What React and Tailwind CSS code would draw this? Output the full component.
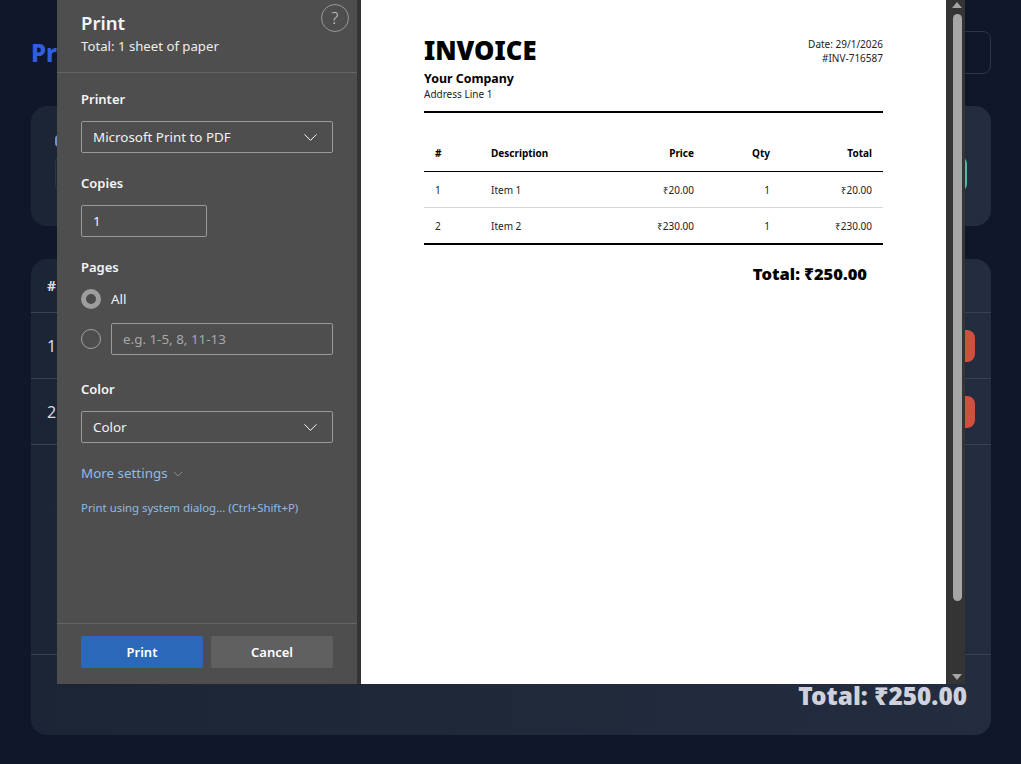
import { ChevronDown } from 'lucide-react';

const ui = "font-['Noto_Sans','Open_Sans',sans-serif]";

const SelectBox = ({ value }) => (
  <div className="flex h-8 w-[252px] items-center justify-between rounded-[2px] border border-[#9a9a9a] pl-[11px] pr-[10px] text-[13.4px] text-[#f2f2f2]">
    <span>{value}</span>
    <ChevronDown size={23} strokeWidth={1} className="text-white" />
  </div>
);

const Label = ({ children, className = '' }) => (
  <div className={`text-[13px] leading-5 font-semibold text-[#f5f5f5] ${className}`}>{children}</div>
);

const invoiceRows = [
  { id: 1, name: 'Item 1', price: '₹20.00', qty: 1, total: '₹20.00' },
  { id: 2, name: 'Item 2', price: '₹230.00', qty: 1, total: '₹230.00' },
];

const PrintSidebar = () => (
  <div className="flex w-[300px] flex-col bg-[#4e4e4e]">
    <div className="relative h-[73px] border-b border-[#646464] px-6 pt-[11px]">
      <div className="text-[18.5px] leading-6 font-semibold text-[#f5f5f5]">Print</div>
      <div className="mt-[1px] text-[13.2px] leading-5 text-[#ededed]">Total: 1 sheet of paper</div>
      <div className="absolute top-1 right-2 flex h-7 w-7 items-center justify-center rounded-full border border-[#9a9a9a] text-base font-light text-[#d0d0d0]">?</div>
    </div>
    <div className="flex-1 px-6 pt-4">
      <Label>Printer</Label>
      <div className="mt-3"><SelectBox value="Microsoft Print to PDF" /></div>
      <Label className="mt-5">Copies</Label>
      <div className="mt-3 flex h-8 w-[126px] items-center rounded-[2px] border border-[#9a9a9a] pl-[11px] text-[13.4px] text-[#f2f2f2]">1</div>
      <Label className="mt-5">Pages</Label>
      <div className="mt-3 flex h-5 items-center gap-[10px]">
        <div className="h-5 w-5 rounded-full border-[5px] border-[#9d9d9d] bg-[#4a4a4a]" />
        <span className="text-[13.4px] text-[#f2f2f2]">All</span>
      </div>
      <div className="mt-[14px] flex items-center gap-[10px]">
        <div className="h-5 w-5 rounded-full border border-[#a3a3a3]" />
        <div className="flex h-8 w-[222px] items-center rounded-[2px] border border-[#9a9a9a] pl-[11px] pt-[1px] text-[13.4px] text-[#a8a8a8]">e.g. 1-5, 8, 11-13</div>
      </div>
      <Label className="mt-6">Color</Label>
      <div className="mt-3"><SelectBox value="Color" /></div>
      <div className="mt-5 flex items-center gap-[2px] text-[13.4px] leading-5 text-[#8fbbe8]">
        More settings
        <ChevronDown size={16} strokeWidth={1} className="mt-[2px] text-[#a9a9a9]" />
      </div>
      <div className="mt-[17px] text-[11.4px] leading-4 text-[#8fbbe8]">Print using system dialog... (Ctrl+Shift+P)</div>
    </div>
    <div className="flex h-[61px] gap-2 border-t border-[#646464] px-6 pt-3">
      <button className="h-8 w-[122px] rounded-[2px] bg-[#2b68b9] pt-[1px] text-[13px] font-semibold text-white">Print</button>
      <button className="h-8 w-[122px] rounded-[2px] bg-[#606060] pt-[1px] text-[13px] font-semibold text-white">Cancel</button>
    </div>
  </div>
);

const InvoiceSheet = () => (
  <div className="flex-1 bg-white px-[63px] pt-[33px] text-black">
    <div className="flex items-start justify-between">
      <div>
        <div className="text-[25.6px] leading-9 font-black">INVOICE</div>
        <div className="mt-[1px] text-[12.4px] leading-[17px] font-bold">Your Company</div>
        <div className="text-[10px] leading-[14px] text-[#222]">Address Line 1</div>
      </div>
      <div className="pt-[4px] text-right text-[10px] leading-[14px] text-[#222]">
        <div>Date: 29/1/2026</div>
        <div>#INV-716587</div>
      </div>
    </div>
    <div className="mt-[10px] border-t-2 border-black" />
    <div className="mt-[28px] grid h-[31px] grid-cols-[56px_120px_83px_76px_102px] items-center border-b border-black px-[11px] pb-[6px] text-[10px] font-bold">
      <span>#</span>
      <span>Description</span>
      <span className="text-right">Price</span>
      <span className="text-right">Qty</span>
      <span className="text-right">Total</span>
    </div>
    <div>
      {invoiceRows.map((row) => (
        <div
          key={row.id}
          className="grid h-[36px] grid-cols-[56px_120px_83px_76px_102px] items-center border-b border-[#d6d6d6] px-[11px] pt-[1px] text-[10px] text-[#222] last:h-[37px] last:border-b-2 last:border-black"
        >
          <span>{row.id}</span>
          <span>{row.name}</span>
          <span className="text-right">{row.price}</span>
          <span className="text-right">{row.qty}</span>
          <span className="text-right">{row.total}</span>
        </div>
      ))}
    </div>
    <div className="mt-[17px] pr-4 text-right text-[16.5px] leading-6 font-black">Total: ₹250.00</div>
  </div>
);

const Scrollbar = () => (
  <div className="relative w-[19px] bg-[#343434]">
    <div className="absolute top-[2px] left-[6px] h-0 w-0 border-x-[5px] border-b-[6px] border-x-transparent border-b-[#a6a6a6]" />
    <div className="absolute top-[14px] left-[7px] h-[587px] w-[9px] rounded-full bg-[#a6a6a6]" />
    <div className="absolute bottom-[4px] left-[6px] h-0 w-0 border-x-[5px] border-t-[6px] border-x-transparent border-t-[#a6a6a6]" />
  </div>
);

export default function App() {
  return (
    <div className={`relative h-[764px] overflow-hidden bg-[#10172a] pr-[30px] pl-[31px] pt-[31px] ${ui}`}>
      {/* page behind the dialog */}
      <div className="flex h-[43px] items-center justify-between">
        <h1 className="text-2xl font-extrabold text-[#2f5fe0]">Pr</h1>
        <div className="h-[43px] w-[120px] rounded-lg border border-[#2d3648]" />
      </div>
      <div className="mt-8 h-[120px] rounded-2xl bg-gradient-to-r from-[#1b2536] to-[#232d3f] px-6 pt-[29px]">
        <div className="h-3 w-6 rounded-sm bg-[#6f93c4]" />
        <div className="mt-2 flex items-center justify-between">
          <div className="h-[37px] w-[300px] rounded-lg border border-[#2d3648]" />
          <div className="h-[36px] w-[120px] rounded-lg bg-[#56b89a]" />
        </div>
      </div>
      <div className="mt-[33px] flex h-[476px] flex-col rounded-2xl bg-gradient-to-r from-[#1b2536] to-[#232d3f] text-[#d9dce3]">
        <div className="flex h-[54px] items-center border-b border-[#39424f] px-4 text-sm font-bold">#</div>
        {[1, 2].map((n) => (
          <div key={n} className="flex h-[66px] items-center justify-between border-b border-[#39424f] pr-4 pl-4">
            <span className="text-base">{n}</span>
            <div className="h-8 w-20 rounded-lg bg-[#d0503f]" />
          </div>
        ))}
        <div className="h-[210px] border-b border-[#39424f]" />
        <div className="pt-[25px] pr-6 text-right text-[24.4px] leading-8 font-black text-[#cfd2da]">Total: ₹250.00</div>
      </div>

      {/* print preview dialog */}
      <div className="absolute top-0 left-[57px] flex h-[684px] w-[908px]">
        <PrintSidebar />
        <div className="w-1 bg-[#343434]" />
        <InvoiceSheet />
        <Scrollbar />
      </div>
    </div>
  );
}
